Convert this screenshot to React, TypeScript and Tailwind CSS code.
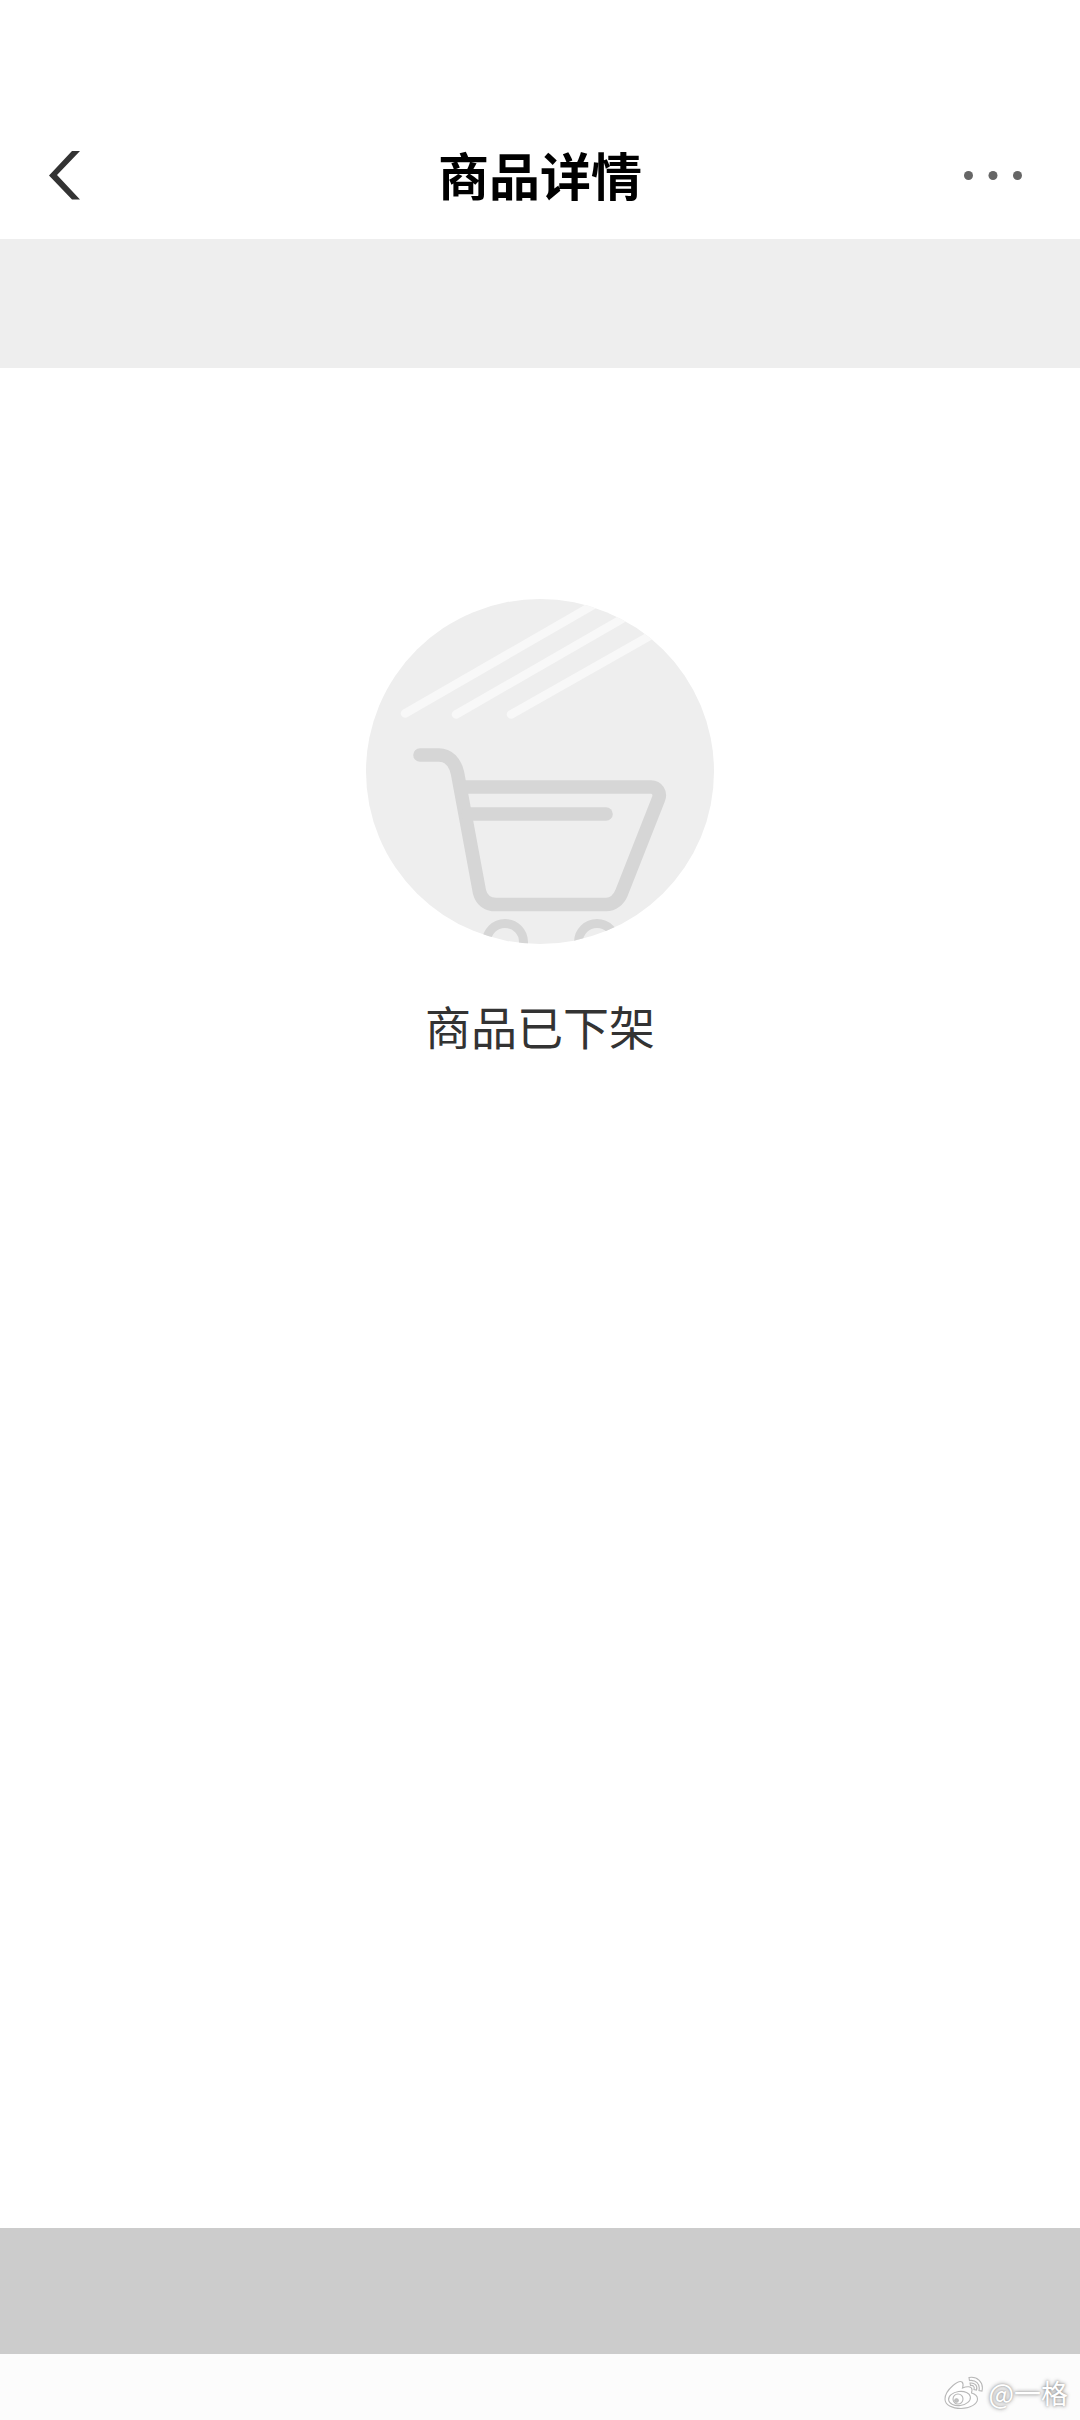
function BackIcon() {
  return (
    <svg viewBox="0 0 32 50" className="w-8 h-[50px]" fill="#333333" aria-hidden="true">
      <path d="M24 0 H32 L9 24 L32 48.500 H24 L1 24.500 Z" />
    </svg>
  );
}

function MoreIcon() {
  return (
    <svg viewBox="0 0 58 10" className="w-[58px] h-[10px]" fill="#666666" aria-hidden="true">
      <circle cx="4.500" cy="4.500" r="4.500" />
      <circle cx="29" cy="4.500" r="4.500" />
      <circle cx="53.500" cy="4.500" r="4.500" />
    </svg>
  );
}

function EmptyCart() {
  return (
    <svg viewBox="0 0 348 346" className="w-[348px] h-[346px]" fill="none" strokeLinecap="round" aria-hidden="true">
      <defs>
        <clipPath id="plate">
          <ellipse cx="174" cy="172.500" rx="174" ry="172.500" />
        </clipPath>
      </defs>
      <g clipPath="url(#plate)">
        <rect width="348" height="346" fill="#eeeeee" />
        <g stroke="#f8f8f8" strokeWidth="8.500">
          <path d="M39 114.500 L255 -10" />
          <path d="M90 115.500 L287 2" />
          <path d="M145 115.500 L310 22" />
        </g>
        <g stroke="#d6d6d6" strokeWidth="13.600">
          <path d="M54 156 H73 C82 156 89 163 91.500 174 L113.500 293 C115.500 301 121 305.500 130 305.500 H240 C247 305.500 252.500 301 255.500 294 L292.500 200 C295 194 291 188 285 188 H97" />
          <path d="M102 215 H240" />
        </g>
        <g stroke="#d6d6d6" strokeWidth="9">
          <circle cx="139" cy="343" r="18.500" />
          <circle cx="231" cy="343" r="18.500" />
        </g>
      </g>
    </svg>
  );
}

function WeiboIcon() {
  return (
    <svg viewBox="0 0 40 34" className="w-10 h-[34px]" fill="#ffffff" stroke="#b8b8b8" strokeWidth="1.100" aria-hidden="true">
      <path d="M18 6 C20 8 19 10 18.500 12 C23 10 28 10 28 14 C28 15 27.500 16 27.500 17 C31 18 33.500 20 33.500 23 C33.500 28 26 32.500 17 32.500 C8 32.500 1 29 1 23 C1 18 5 13 9 9.500 C12 7 16 4.500 18 6 Z" />
      <ellipse cx="15.500" cy="22.500" rx="11" ry="7" transform="rotate(-8 15.500 22.500)" />
      <circle cx="14" cy="23" r="5" />
      <circle cx="12.500" cy="24.500" r="1.800" fill="#c4c4c4" />
      <path d="M25 1.500 C33 0 40 6 38 15 L35 14.500 C36.500 8 31.500 3.500 25.500 4.500 Z" />
      <path d="M26 7 C30.500 6.500 34 9.500 32.500 14 L30 13.500 C31 10.500 29 9 26.500 9.500 Z" />
    </svg>
  );
}

export default function App() {
  return (
    <div className="flex min-h-screen flex-col bg-white font-['Noto_Sans_CJK_SC','Noto_Sans',sans-serif]">
      <header className="grid grid-cols-3 items-center px-12 pt-28 pb-[15px]">
        <button type="button" aria-label="返回" className="flex h-28 items-center justify-self-start pt-4">
          <BackIcon />
        </button>
        <h1 className="justify-self-center whitespace-nowrap pt-3 text-[51px] leading-[76px] font-bold text-black">
          商品详情
        </h1>
        <button type="button" aria-label="更多" className="mr-[10px] flex h-28 items-center justify-self-end pt-4">
          <MoreIcon />
        </button>
      </header>

      <div className="h-[129px] bg-[#eeeeee]" />

      <main className="flex flex-1 flex-col items-center pt-[231px]">
        <EmptyCart />
        <p className="mt-[46px] text-[46px] leading-[68px] text-[#333333]">商品已下架</p>
      </main>

      <div className="h-[126px] bg-[#cccccc]" />

      <footer className="flex h-[66px] items-center justify-end gap-1 bg-[#fcfcfc] pt-3 pr-3">
        <WeiboIcon />
        <span className="text-[27px] leading-8 text-white [text-shadow:0_0_4px_#888888,0_0_2px_#aaaaaa]">@一格</span>
      </footer>
    </div>
  );
}
